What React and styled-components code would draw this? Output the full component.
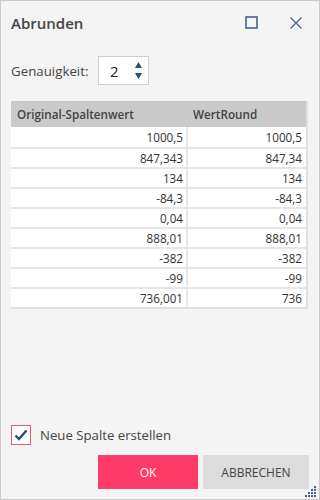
import React from "react";
import styled, { createGlobalStyle } from "styled-components";

const Global = createGlobalStyle`
  html, body { margin: 0; padding: 0; background: #f4f4f4; }
  * { box-sizing: border-box; }
`;

const Window = styled.div`
  position: relative;
  width: 320px;
  height: 500px;
  border: 1px solid #c9c9c9;
  background: #f4f4f4;
  font-family: "Open Sans", "Noto Sans", sans-serif;
  color: #444;
  display: flex;
  flex-direction: column;
  padding: 0 10px 10px 10px;
`;

const TitleBar = styled.div`
  height: 43px;
  display: flex;
  align-items: center;
`;

const Title = styled.div`
  flex: 1;
  font-size: 15px;
  font-weight: 600;
  color: #444;
`;

const IconButton = styled.button`
  border: 0;
  background: transparent;
  padding: 0;
  width: 14px;
  height: 14px;
  display: flex;
  align-items: center;
  justify-content: center;
  margin-left: ${(p) => p.$gap}px;
  margin-right: ${(p) => p.$right || 0}px;
`;

const PrecisionRow = styled.div`
  display: flex;
  align-items: center;
  margin-top: 12px;
  gap: 10px;
`;

const Label = styled.span`
  font-size: 13.3px;
  color: #444;
  width: 77px;
`;

const SpinBox = styled.div`
  width: 51px;
  height: 29px;
  background: #fff;
  border: 1px solid #cfcfcf;
  display: flex;
  align-items: center;
  padding-left: 11px;
  padding-right: 6px;
  font-size: 15px;
  color: #222;
`;

const SpinValue = styled.span`
  flex: 1;
`;

const Arrows = styled.div`
  display: flex;
  flex-direction: column;
  gap: 5px;
`;

const Table = styled.div`
  margin-top: 16px;
  width: 297px;
  border-right: 2px solid #e0e0e0;
  border-bottom: 2px solid #e0e0e0;
  display: grid;
  grid-template-columns: 175px 1fr;
  font-size: 11.7px;
`;

const HeadCell = styled.div`
  height: 26px;
  background: #cacaca;
  font-weight: 600;
  color: #444;
  display: flex;
  align-items: center;
  padding-left: ${(p) => p.$pl}px;
`;

const Cell = styled.div`
  height: 20px;
  background: #fff;
  color: #333;
  display: flex;
  align-items: center;
  justify-content: flex-end;
  padding-right: ${(p) => (p.$first ? 3 : 4)}px;
  border-top: ${(p) => (p.$top ? "0" : "2px solid #e6e6e6")};
  border-left: ${(p) => (p.$first ? "0" : "2px solid #e6e6e6")};
`;

const Spacer = styled.div`
  flex: 1;
`;

const CheckRow = styled.label`
  display: flex;
  align-items: center;
  gap: 9px;
  font-size: 13.2px;
  color: #444;
`;

const Box = styled.span`
  width: 20px;
  height: 20px;
  border: 1px solid #f0557a;
  background: #fff;
  display: flex;
  align-items: center;
  justify-content: center;
`;

const ButtonRow = styled.div`
  display: flex;
  justify-content: flex-end;
  gap: 5px;
  margin-top: 10px;
`;

const Button = styled.button`
  height: 34px;
  width: ${(p) => p.$w}px;
  border: 0;
  font-family: "Open Sans", "Noto Sans", sans-serif;
  font-size: 12px;
  background: ${(p) => (p.$primary ? "#ff3b68" : "#dcdcdc")};
  color: ${(p) => (p.$primary ? "#fff" : "#444")};
  padding: 0;
`;

const Grip = styled.svg`
  position: absolute;
  right: 2px;
  bottom: 2px;
`;

const rows = [
  ["1000,5", "1000,5"],
  ["847,343", "847,34"],
  ["134", "134"],
  ["-84,3", "-84,3"],
  ["0,04", "0,04"],
  ["888,01", "888,01"],
  ["-382", "-382"],
  ["-99", "-99"],
  ["736,001", "736"],
];

export default function App() {
  return (
    <>
      <Global />
      <Window>
        <TitleBar>
          <Title>Abrunden</Title>
          <IconButton $gap={0}>
            <svg width="13" height="13" viewBox="0 0 13 13">
              <rect x="1" y="1" width="11" height="11" fill="none" stroke="#45658a" strokeWidth="1.6" />
            </svg>
          </IconButton>
          <IconButton $gap={31} $right={6}>
            <svg width="14" height="14" viewBox="0 0 14 14">
              <path d="M1.5 1.5 L12.5 12.5 M12.5 1.5 L1.5 12.5" stroke="#45658a" strokeWidth="1.3" fill="none" />
            </svg>
          </IconButton>
        </TitleBar>
        <PrecisionRow>
          <Label>Genauigkeit:</Label>
          <SpinBox>
            <SpinValue>2</SpinValue>
            <Arrows>
              <svg width="7" height="6" viewBox="0 0 7 6">
                <path d="M3.5 0 L7 6 L0 6 Z" fill="#2d4d73" />
              </svg>
              <svg width="7" height="6" viewBox="0 0 7 6">
                <path d="M0 0 L7 0 L3.5 6 Z" fill="#2d4d73" />
              </svg>
            </Arrows>
          </SpinBox>
        </PrecisionRow>
        <Table>
          <HeadCell $pl={6}>Original-Spaltenwert</HeadCell>
          <HeadCell $pl={7}>WertRound</HeadCell>
          {rows.map(([a, b], i) => (
            <React.Fragment key={i}>
              <Cell $first $top={i === 0}>{a}</Cell>
              <Cell $top={i === 0}>{b}</Cell>
            </React.Fragment>
          ))}
        </Table>
        <Spacer />
        <CheckRow>
          <Box>
            <svg width="14" height="12" viewBox="0 0 14 12">
              <path d="M1.5 6.5 L5 10 L12.5 1.5" stroke="#2a4a70" strokeWidth="2.4" fill="none" />
            </svg>
          </Box>
          Neue Spalte erstellen
        </CheckRow>
        <ButtonRow>
          <Button $primary $w={100}>OK</Button>
          <Button $w={106}>ABBRECHEN</Button>
        </ButtonRow>
        <Grip width="12" height="12" viewBox="0 0 12 12">
          {[[10, 2], [7, 5], [10, 5], [4, 8], [7, 8], [10, 8], [1, 11], [4, 11], [7, 11], [10, 11]].map(([x, y], i) => (
            <rect key={i} x={x - 1} y={y - 1} width="2" height="2" fill="#45658a" />
          ))}
        </Grip>
      </Window>
    </>
  );
}
